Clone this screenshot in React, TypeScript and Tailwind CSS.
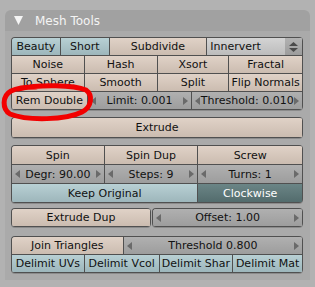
import React from "react";

type V = "beige" | "blue" | "teal" | "num" | "menu";

const bg: Record<V, string> = {
  beige: "bg-gradient-to-b from-[#e0d2c7] to-[#cbbcb0] text-[#111]",
  blue: "bg-gradient-to-b from-[#b8d0d4] to-[#9db6bb] text-[#111]",
  teal: "bg-gradient-to-b from-[#6b8586] to-[#536c6d] text-white",
  num: "bg-gradient-to-b from-[#b0b0b0] to-[#9d9d9d] text-[#111]",
  menu: "bg-gradient-to-b from-[#d4d4d4] to-[#bcbcbc] text-[#111]",
};

function Arrow({ dir }: { dir: "l" | "r" }) {
  return (
    <svg width="5" height="8" viewBox="0 0 5 8" className="shrink-0">
      {dir === "l" ? (
        <polygon points="5,0 5,8 0,4" fill="#6a6a6a" />
      ) : (
        <polygon points="0,0 0,8 5,4" fill="#6a6a6a" />
      )}
    </svg>
  );
}

function B({
  label,
  v = "beige",
  w,
}: {
  label: string;
  v?: V;
  w: string;
}) {
  if (v === "num") {
    return (
      <div
        className={`${w} ${bg[v]} h-full flex items-center justify-between px-[3px] border-r border-b border-[#505050] overflow-hidden whitespace-nowrap`}
      >
        <Arrow dir="l" />
        <span>{label}</span>
        <Arrow dir="r" />
      </div>
    );
  }
  if (v === "menu") {
    return (
      <div
        className={`${w} ${bg[v]} h-full flex items-center border-r border-b border-[#505050] overflow-hidden whitespace-nowrap`}
      >
        <span className="pl-[3px] flex-1">{label}</span>
        <div className="w-[17px] h-full bg-gradient-to-b from-[#b2b2b2] to-[#9c9c9c] flex items-center justify-center">
          <svg width="9" height="10" viewBox="0 0 9 10">
            <polygon points="4.5,0 9,4 0,4" fill="#4a4a4a" />
            <polygon points="0,6 9,6 4.5,10" fill="#4a4a4a" />
          </svg>
        </div>
      </div>
    );
  }
  return (
    <div
      className={`${w} ${bg[v]} h-full flex items-center justify-center border-r border-b border-[#505050] overflow-hidden whitespace-nowrap`}
    >
      {label}
    </div>
  );
}

function Group({ children, cls = "" }: { children: React.ReactNode; cls?: string }) {
  return (
    <div
      className={`flex flex-col border-l border-t border-[#505050] rounded-[4px] overflow-hidden shadow-[0_1px_0_rgba(0,0,0,0.18)] ${cls}`}
    >
      {children}
    </div>
  );
}

function Row({ h, children }: { h: string; children: React.ReactNode }) {
  return <div className={`flex ${h}`}>{children}</div>;
}

export default function App() {
  return (
    <div
      className="relative w-[315px] h-[287px] bg-[#b2b2b2] overflow-hidden text-[11px] leading-none"
      style={{ fontFamily: '"DejaVu Sans", sans-serif' }}
    >
      <div className="pt-[10px] pl-[5px]">
        <div className="w-[305px]">
          <div className="h-[21px] bg-[#a1a1a1] rounded-t-[6px] flex items-center">
            <svg width="9" height="9" viewBox="0 0 9 9" className="ml-[9px]">
              <polygon points="0,0 9,0 4.5,9" fill="#f4f4f4" />
            </svg>
            <span className="ml-[12px] text-[12px] text-[#f4f4f4]">Mesh Tools</span>
          </div>
          <div className="bg-[#aaaaaa] pl-[6px] pr-[7px] pt-[6px] pb-[7px] flex flex-col">
            <Group>
              <Row h="h-[18px]">
                <B label="Beauty" v="blue" w="w-[49px]" />
                <B label="Short" v="blue" w="w-[49px]" />
                <B label="Subdivide" w="w-[98px]" />
                <B label="Innervert" v="menu" w="w-[96px]" />
              </Row>
              <Row h="h-[18px]">
                <B label="Noise" w="w-[73px]" />
                <B label="Hash" w="w-[73px]" />
                <B label="Xsort" w="w-[72px]" />
                <B label="Fractal" w="w-[74px]" />
              </Row>
              <Row h="h-[18px]">
                <B label="To Sphere" w="w-[73px]" />
                <B label="Smooth" w="w-[73px]" />
                <B label="Split" w="w-[72px]" />
                <B label="Flip Normals" w="w-[74px]" />
              </Row>
              <Row h="h-[18px]">
                <B label="Rem Double" w="w-[76px]" />
                <B label="Limit: 0.001" v="num" w="w-[105px]" />
                <B label="Threshold: 0.010" v="num" w="w-[111px]" />
              </Row>
            </Group>
            <Group cls="mt-[7px]">
              <Row h="h-[20px]">
                <B label="Extrude" w="w-[292px]" />
              </Row>
            </Group>
            <Group cls="mt-[7px]">
              <Row h="h-[19px]">
                <B label="Spin" w="w-[93px]" />
                <B label="Spin Dup" w="w-[94px]" />
                <B label="Screw" w="w-[105px]" />
              </Row>
              <Row h="h-[19px]">
                <B label="Degr: 90.00" v="num" w="w-[93px]" />
                <B label="Steps: 9" v="num" w="w-[94px]" />
                <B label="Turns: 1" v="num" w="w-[105px]" />
              </Row>
              <Row h="h-[19px]">
                <B label="Keep Original" v="blue" w="w-[187px]" />
                <B label="Clockwise" v="teal" w="w-[105px]" />
              </Row>
            </Group>
            <div className="flex mt-[5px] gap-[1px]">
              <Group>
                <Row h="h-[18px]">
                  <B label="Extrude Dup" w="w-[140px]" />
                </Row>
              </Group>
              <Group>
                <Row h="h-[18px]">
                  <B label="Offset: 1.00" v="num" w="w-[151px]" />
                </Row>
              </Group>
            </div>
            <Group cls="mt-[9px]">
              <Row h="h-[18px]">
                <B label="Join Triangles" w="w-[112px]" />
                <B label="Threshold 0.800" v="num" w="w-[180px]" />
              </Row>
              <Row h="h-[18px]">
                <B label="Delimit UVs" v="blue" w="w-[73px]" />
                <B label="Delimit Vcol" v="blue" w="w-[75px]" />
                <B label="Delimit Shar" v="blue" w="w-[74px]" />
                <B label="Delimit Mat" v="blue" w="w-[70px]" />
              </Row>
            </Group>
          </div>
        </div>
      </div>
      <svg
        className="absolute left-0 top-0 pointer-events-none"
        width="315"
        height="287"
        viewBox="0 0 315 287"
      >
        <path
          d="M 18 89 C 40 84, 74 85, 86 90 C 93 95, 92 107, 82 112 C 66 120, 28 121, 10 114 C 2 109, 2 96, 11 91 C 17 88, 26 87, 36 87"
          fill="none"
          stroke="#f20000"
          strokeWidth="5"
          strokeLinecap="round"
        />
      </svg>
    </div>
  );
}
